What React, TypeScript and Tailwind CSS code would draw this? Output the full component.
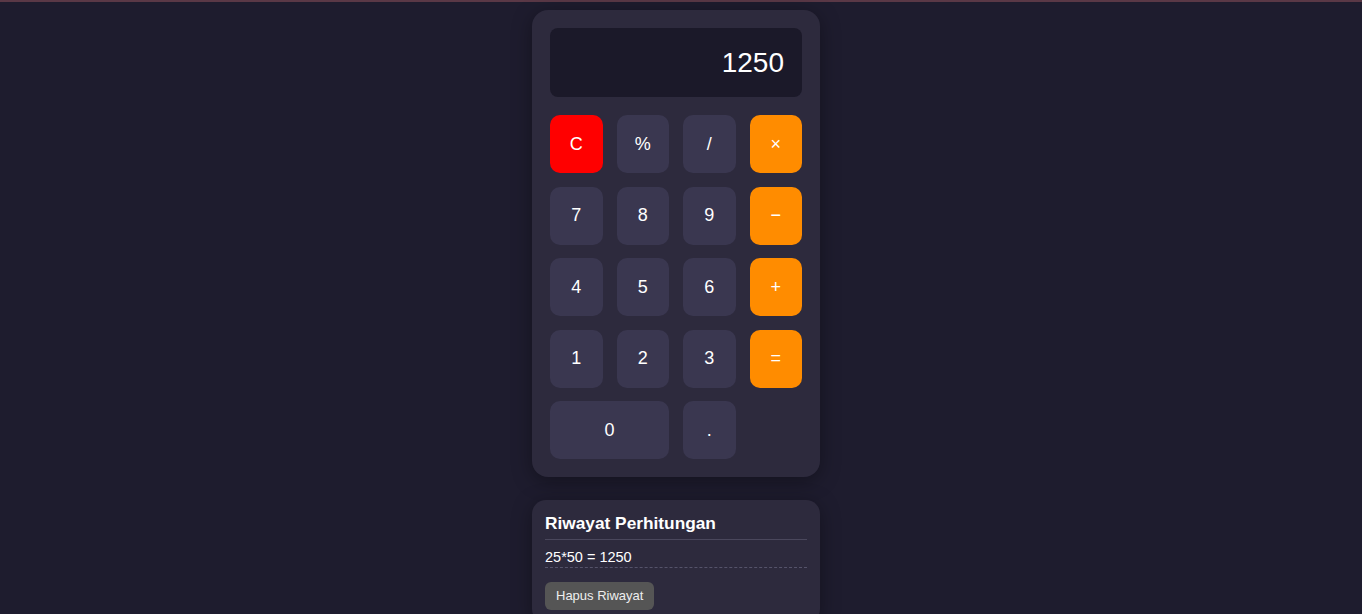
export default function App() {
  const keys: { label: string; kind: "num" | "op" | "clear"; wide?: boolean }[] = [
    { label: "C", kind: "clear" },
    { label: "%", kind: "num" },
    { label: "/", kind: "num" },
    { label: "×", kind: "op" },
    { label: "7", kind: "num" },
    { label: "8", kind: "num" },
    { label: "9", kind: "num" },
    { label: "−", kind: "op" },
    { label: "4", kind: "num" },
    { label: "5", kind: "num" },
    { label: "6", kind: "num" },
    { label: "+", kind: "op" },
    { label: "1", kind: "num" },
    { label: "2", kind: "num" },
    { label: "3", kind: "num" },
    { label: "=", kind: "op" },
    { label: "0", kind: "num", wide: true },
    { label: ".", kind: "num" },
  ];

  return (
    <div className="min-h-screen w-full bg-[#1e1c2e] border-t-2 border-[#5a3846] font-['Liberation_Sans',Arial,sans-serif] text-white">
      <div className="flex flex-col items-center pt-[8px] pb-[54px] pr-[10px]">
        {/* kalkulator */}
        <div className="w-[288px] rounded-[16px] bg-[#2d2a3d] p-[18px] shadow-[0_4px_20px_rgba(0,0,0,0.35)]">
          <div className="h-[69px] rounded-[8px] bg-[#1b1929] flex items-center justify-end px-[18px] text-[28px]">
            1250
          </div>
          <div className="mt-[18px] grid grid-cols-4 gap-x-[14px] gap-y-[13.5px]">
            {keys.map((k) => (
              <button
                key={k.label}
                className={
                  "h-[58px] rounded-[10px] text-[18px] text-white flex items-center justify-center " +
                  (k.wide ? "col-span-2 " : "") +
                  (k.kind === "clear"
                    ? "bg-[#ff0000]"
                    : k.kind === "op"
                    ? "bg-[#ff8c00]"
                    : "bg-[#3a3750]")
                }
              >
                {k.label}
              </button>
            ))}
          </div>
        </div>

        {/* riwayat */}
        <div className="mt-[23px] w-[288px] rounded-[14px] bg-[#2d2a3d] px-[13px] pt-[13px] pb-[13px] shadow-[0_4px_20px_rgba(0,0,0,0.35)]">
          <h2 className="text-[17.3px] font-bold leading-[20px] pb-[6px] border-b border-[#4a475c]">
            Riwayat Perhitungan
          </h2>
          <div className="mt-[9px] text-[14.5px] leading-[17px] pb-[1px] border-b border-dashed border-[#55536a]">
            25*50 = 1250
          </div>
          <button className="mt-[14px] h-[28px] px-[11px] rounded-[6px] bg-[#555555] text-[13px] text-[#eeeeee]">
            Hapus Riwayat
          </button>
        </div>
      </div>
    </div>
  );
}
